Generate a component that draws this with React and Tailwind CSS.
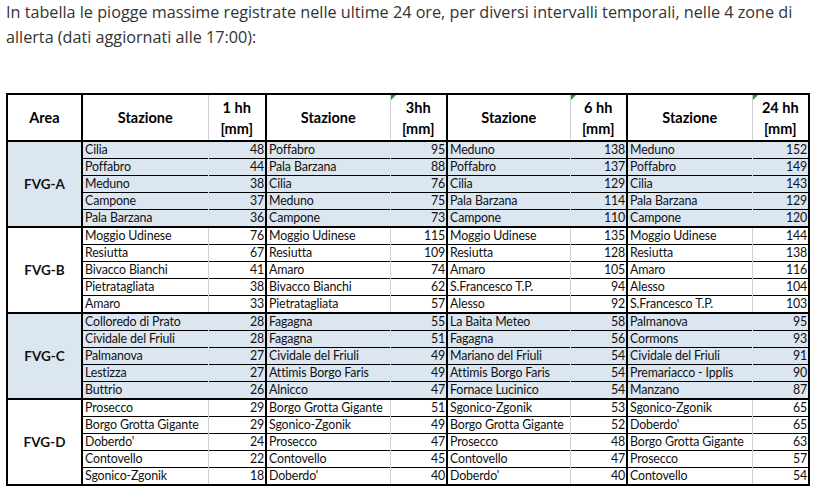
import React from 'react';

const GROUPS = [
  {
    area: 'FVG-A',
    blue: true,
    rows: [
      ['Cilia', 48, 'Poffabro', 95, 'Meduno', 138, 'Meduno', 152],
      ['Poffabro', 44, 'Pala Barzana', 88, 'Poffabro', 137, 'Poffabro', 149],
      ['Meduno', 38, 'Cilia', 76, 'Cilia', 129, 'Cilia', 143],
      ['Campone', 37, 'Meduno', 75, 'Pala Barzana', 114, 'Pala Barzana', 129],
      ['Pala Barzana', 36, 'Campone', 73, 'Campone', 110, 'Campone', 120],
    ],
  },
  {
    area: 'FVG-B',
    blue: false,
    rows: [
      ['Moggio Udinese', 76, 'Moggio Udinese', 115, 'Moggio Udinese', 135, 'Moggio Udinese', 144],
      ['Resiutta', 67, 'Resiutta', 109, 'Resiutta', 128, 'Resiutta', 138],
      ['Bivacco Bianchi', 41, 'Amaro', 74, 'Amaro', 105, 'Amaro', 116],
      ['Pietratagliata', 38, 'Bivacco Bianchi', 62, 'S.Francesco T.P.', 94, 'Alesso', 104],
      ['Amaro', 33, 'Pietratagliata', 57, 'Alesso', 92, 'S.Francesco T.P.', 103],
    ],
  },
  {
    area: 'FVG-C',
    blue: true,
    rows: [
      ['Colloredo di Prato', 28, 'Fagagna', 55, 'La Baita Meteo', 58, 'Palmanova', 95],
      ['Cividale del Friuli', 28, 'Fagagna', 51, 'Fagagna', 56, 'Cormons', 93],
      ['Palmanova', 27, 'Cividale del Friuli', 49, 'Mariano del Friuli', 54, 'Cividale del Friuli', 91],
      ['Lestizza', 27, 'Attimis Borgo Faris', 49, 'Attimis Borgo Faris', 54, 'Premariacco - Ipplis', 90],
      ['Buttrio', 26, 'Alnicco', 47, 'Fornace Lucinico', 54, 'Manzano', 87],
    ],
  },
  {
    area: 'FVG-D',
    blue: false,
    rows: [
      ['Prosecco', 29, 'Borgo Grotta Gigante', 51, 'Sgonico-Zgonik', 53, 'Sgonico-Zgonik', 65],
      ['Borgo Grotta Gigante', 29, 'Sgonico-Zgonik', 49, 'Borgo Grotta Gigante', 52, "Doberdo'", 65],
      ["Doberdo'", 24, 'Prosecco', 47, 'Prosecco', 48, 'Borgo Grotta Gigante', 63],
      ['Contovello', 22, 'Contovello', 45, 'Contovello', 47, 'Prosecco', 57],
      ['Sgonico-Zgonik', 18, "Doberdo'", 40, "Doberdo'", 40, 'Contovello', 54],
    ],
  },
];

const INTERVALS = [
  { label: '1 hh', flag: false },
  { label: '3hh', flag: true },
  { label: '6 hh', flag: true },
  { label: '24 hh', flag: true },
];

function Flag() {
  return (
    <span className="absolute top-0 left-0 w-0 h-0 border-t-[5px] border-r-[5px] border-t-[#2f8f2f] border-r-transparent" />
  );
}

export default function App() {
  return (
    <div className="w-[822px] h-[496px] bg-white overflow-hidden" style={{ fontFamily: '"Open Sans", sans-serif' }}>
      <p className="pl-[6px] pr-2 text-[16.2px] leading-[25px] text-[#333]">
        In tabella le piogge massime registrate nelle ultime 24 ore, per diversi intervalli temporali, nelle 4 zone di
        allerta (dati aggiornati alle 17:00):
      </p>

      <table
        className="mt-[43px] ml-[6px] w-[802px] table-fixed border-collapse border-2 border-black text-black"
        style={{ fontFamily: 'Lato, sans-serif' }}
      >
        <colgroup>
          <col className="w-[75px]" />
          <col className="w-[126px]" />
          <col className="w-[58px]" />
          <col className="w-[124px]" />
          <col className="w-[57px]" />
          <col className="w-[123px]" />
          <col className="w-[57px]" />
          <col className="w-[125px]" />
          <col className="w-[57px]" />
        </colgroup>
        <thead>
          <tr className="h-[47px] text-[14.5px] font-bold leading-[21px]">
            <th className="border-r-2 border-b-2 border-black">Area</th>
            {INTERVALS.map((iv) => (
              <React.Fragment key={iv.label}>
                <th className="border-r border-r-[#d0d0d0] border-b-2 border-b-black">Stazione</th>
                <th className="relative border-r-2 border-r-black border-b-2 border-b-black">
                  {iv.flag && <Flag />}
                  {iv.label}
                  <br />
                  [mm]
                </th>
              </React.Fragment>
            ))}
          </tr>
        </thead>
        <tbody className="text-[12.4px] tracking-[-0.15px] leading-[16px] text-[#111]">
          {GROUPS.map((g) =>
            g.rows.map((row, i) => {
              const top = i === 0 ? 'border-t-2' : 'border-t';
              const bg = g.blue ? 'bg-[#dce6f1]' : 'bg-white';
              return (
                <tr key={g.area + i} className={`h-[17px] ${bg}`}>
                  {i === 0 && (
                    <td
                      rowSpan={5}
                      className="border-t-2 border-r-2 border-black text-center text-[13.5px] tracking-normal font-bold"
                    >
                      {g.area}
                    </td>
                  )}
                  {[0, 2, 4, 6].map((c) => (
                    <React.Fragment key={c}>
                      <td
                        className={`${top} border-t-black pl-[2px] whitespace-nowrap overflow-hidden border-r ${
                          g.blue ? 'border-r-[#dce6f1]' : 'border-r-[#d0d0d0]'
                        }`}
                      >
                        {row[c]}
                      </td>
                      <td className={`${top} border-t-black border-r-2 border-r-black pr-[1px] text-right`}>
                        {row[c + 1]}
                      </td>
                    </React.Fragment>
                  ))}
                </tr>
              );
            })
          )}
        </tbody>
      </table>
    </div>
  );
}
